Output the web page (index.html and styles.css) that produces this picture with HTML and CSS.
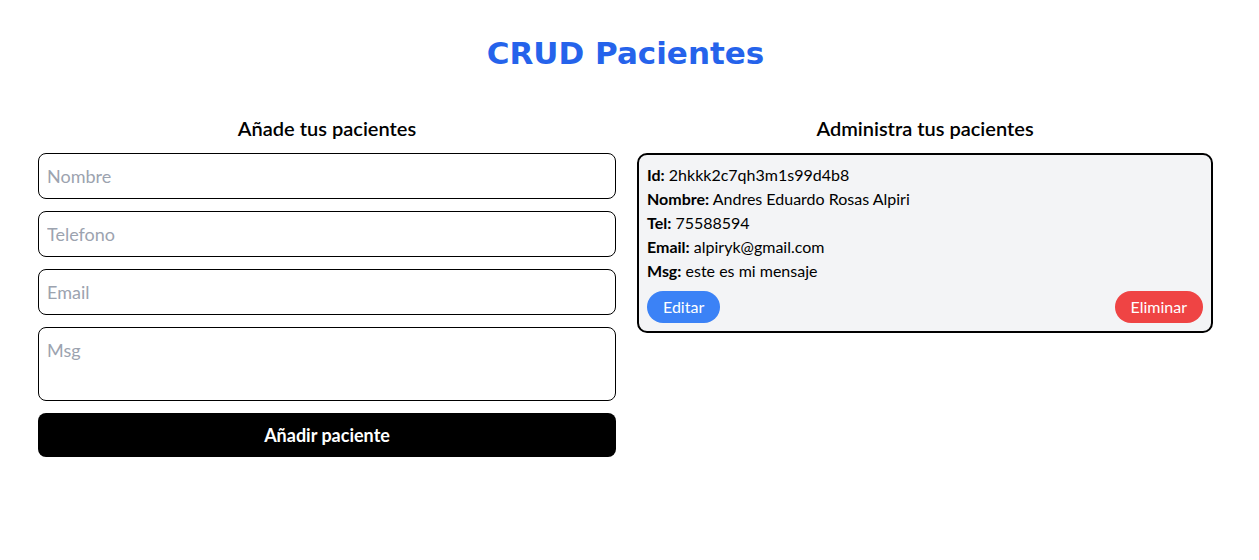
FILE: index.html
```html
<!DOCTYPE html>
<html lang="es">
<head>
<meta charset="utf-8">
<title>CRUD Pacientes</title>
<link rel="stylesheet" href="styles.css">
</head>
<body>
<main class="page">
  <h1 class="title">CRUD Pacientes</h1>
  <div class="columns">
    <section class="col">
      <h2 class="subtitle">Añade tus pacientes</h2>
      <form class="form">
        <input class="field" type="text" placeholder="Nombre">
        <input class="field" type="text" placeholder="Telefono">
        <input class="field" type="text" placeholder="Email">
        <textarea class="field area" placeholder="Msg"></textarea>
        <button class="submit" type="button">Añadir paciente</button>
      </form>
    </section>
    <section class="col">
      <h2 class="subtitle">Administra tus pacientes</h2>
      <div class="card">
        <p class="line"><b>Id:</b> 2hkkk2c7qh3m1s99d4b8</p>
        <p class="line"><b>Nombre:</b> Andres Eduardo Rosas Alpiri</p>
        <p class="line"><b>Tel:</b> 75588594</p>
        <p class="line"><b>Email:</b> alpiryk@gmail.com</p>
        <p class="line"><b>Msg:</b> este es mi mensaje</p>
        <div class="actions">
          <button class="pill edit" type="button">Editar</button>
          <button class="pill delete" type="button">Eliminar</button>
        </div>
      </div>
    </section>
  </div>
</main>
</body>
</html>
```

FILE: styles.css
```css
* { box-sizing: border-box; }
body {
  margin: 0;
  font-family: Lato, "Noto Sans", sans-serif;
  color: #000;
  background: #fff;
}
.page {
  padding: 35px 46px 0 38px;
}
.title {
  margin: 0;
  text-align: center;
  font-family: "DejaVu Sans", Lato, sans-serif;
  font-size: 31px;
  line-height: 36px;
  font-weight: 700;
  color: #2563eb;
}
.columns {
  margin-top: 43px;
  display: grid;
  grid-template-columns: 578px 576px;
  column-gap: 21px;
  align-items: start;
}
.subtitle {
  margin: 0 0 11px;
  text-align: center;
  font-size: 20px;
  line-height: 28px;
  font-weight: 600;
}
.form {
  display: flex;
  flex-direction: column;
  gap: 12px;
}
.field {
  display: block;
  width: 100%;
  border: 1px solid #000;
  border-radius: 8px;
  padding: 8px;
  font-family: inherit;
  font-size: 18px;
  line-height: 28px;
  color: #000;
  background: #fff;
  outline: none;
}
.field::placeholder { color: #9ca3af; }
.area {
  height: 74px;
  resize: none;
}
.submit {
  border: 0;
  border-radius: 8px;
  background: #000;
  color: #fff;
  padding: 8px;
  font-family: inherit;
  font-size: 18px;
  line-height: 28px;
  font-weight: 700;
}
.card {
  border: 2px solid #000;
  border-radius: 10px;
  background: #f3f4f6;
  padding: 8px;
}
.line {
  margin: 0;
  font-size: 16px;
  line-height: 24px;
}
.actions {
  margin-top: 8px;
  display: flex;
  justify-content: space-between;
}
.pill {
  border: 0;
  border-radius: 9999px;
  padding: 4px 16px;
  font-family: inherit;
  font-size: 16px;
  line-height: 24px;
  color: #fff;
}
.edit { background: #3b82f6; }
.delete { background: #ef4444; }
```
